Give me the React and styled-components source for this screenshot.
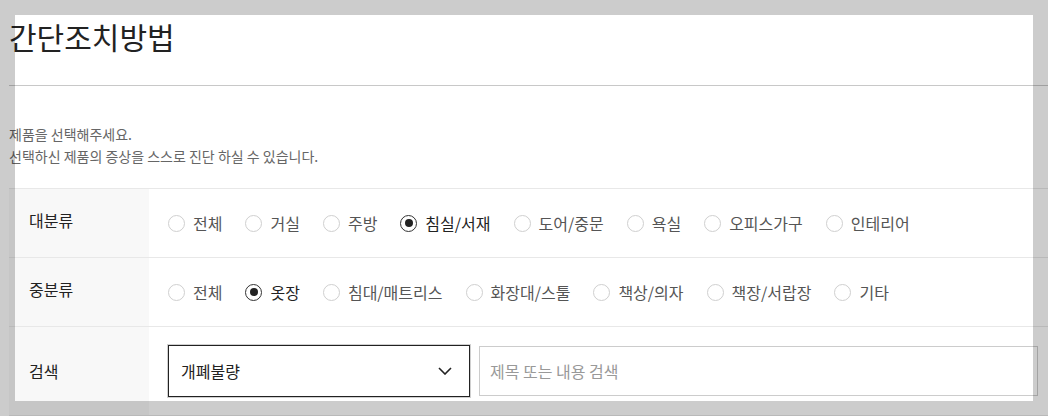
import React, { useState } from "react";
import styled, { createGlobalStyle } from "styled-components";

const GlobalStyle = createGlobalStyle`
  html, body {
    margin: 0;
    padding: 0;
    background: #ffffff;
    overflow: hidden;
  }
  body {
    font-family: "Noto Sans CJK KR", "Noto Sans", sans-serif;
    color: #222;
  }
  * { box-sizing: border-box; }
`;

const Page = styled.div`
  position: relative;
  padding-left: 9px;
  width: 1048px;
`;

const TitleBar = styled.div`
  height: 86px;
  border-bottom: 1px solid #c8c8c8;
  padding-top: 16px;
`;

const Title = styled.h2`
  margin: 0;
  font-size: 30px;
  line-height: 40px;
  font-weight: 400;
  color: #222;
`;

const Desc = styled.p`
  margin: 37px 0 21px;
  font-size: 14px;
  line-height: 22px;
  color: #666;
`;

const Table = styled.div`
  border-top: 1px solid #e8e8e8;
`;

const Row = styled.div`
  display: flex;
  min-height: ${(p) => p.$h}px;
  border-bottom: 1px solid #e8e8e8;
`;

const Label = styled.div`
  width: 140px;
  flex: none;
  background: #f8f8f8;
  padding: 0 0 ${(p) => p.$nudge}px 20px;
  display: flex;
  align-items: center;
  font-size: 16px;
  color: #222;
`;

const Cell = styled.div`
  flex: 1;
  display: flex;
  align-items: center;
  padding: 0 10px 0 19px;
  gap: ${(p) => p.$gap}px;
`;

const RadioItem = styled.label`
  display: inline-flex;
  align-items: center;
  gap: 8px;
  font-size: 16px;
  line-height: 22px;
  color: ${(p) => (p.$on ? "#222" : "#555")};
  cursor: pointer;
  white-space: nowrap;
`;

const Circle = styled.span`
  width: 17px;
  height: 17px;
  border-radius: 50%;
  border: 1px solid ${(p) => (p.$on ? "#333" : "#cfcfcf")};
  background: #fff;
  display: inline-flex;
  align-items: center;
  justify-content: center;
  flex: none;
  &::after {
    content: "";
    width: 8px;
    height: 8px;
    border-radius: 50%;
    background: #222;
    display: ${(p) => (p.$on ? "block" : "none")};
  }
`;

const SelectBox = styled.div`
  width: 302px;
  height: 52px;
  border: 1px solid #222;
  box-shadow: 0 0 0 1px #d0d0d0;
  display: flex;
  align-items: center;
  justify-content: space-between;
  padding: 0 17px 0 12px;
  font-size: 16px;
  color: #222;
  background: #fff;
  flex: none;
`;

const SearchInput = styled.input`
  flex: 1;
  height: 50px;
  border: 1px solid #cccccc;
  padding: 0 10px;
  font-family: "Noto Sans CJK KR", "Noto Sans", sans-serif;
  font-size: 16px;
  color: #222;
  outline: none;
  &::placeholder {
    color: #999;
  }
`;

const Spotlight = styled.div`
  position: absolute;
  left: 15px;
  top: 15px;
  width: 1018px;
  height: 386px;
  box-shadow: 0 0 0 3000px rgba(0, 0, 0, 0.2);
  pointer-events: none;
`;

const Chevron = () => (
  <svg width="14" height="8" viewBox="0 0 14 8" fill="none">
    <path d="M1 1l6 6 6-6" stroke="#222" strokeWidth="1.6" />
  </svg>
);

function RadioGroup({ items, value, onChange }) {
  return items.map((it) => (
    <RadioItem key={it} $on={it === value} onClick={() => onChange(it)}>
      <Circle $on={it === value} />
      {it}
    </RadioItem>
  ));
}

export default function App() {
  const [major, setMajor] = useState("침실/서재");
  const [minor, setMinor] = useState("옷장");
  return (
    <>
      <GlobalStyle />
      <Page>
        <TitleBar>
          <Title>간단조치방법</Title>
        </TitleBar>
        <Desc>
          제품을 선택해주세요.
          <br />
          선택하신 제품의 증상을 스스로 진단 하실 수 있습니다.
        </Desc>
        <Table>
          <Row $h={69}>
            <Label $nudge={6}>대분류</Label>
            <Cell $gap={23}>
              <RadioGroup
                items={["전체", "거실", "주방", "침실/서재", "도어/중문", "욕실", "오피스가구", "인테리어"]}
                value={major}
                onChange={setMajor}
              />
            </Cell>
          </Row>
          <Row $h={69}>
            <Label $nudge={6}>중분류</Label>
            <Cell $gap={23}>
              <RadioGroup
                items={["전체", "옷장", "침대/매트리스", "화장대/스툴", "책상/의자", "책장/서랍장", "기타"]}
                value={minor}
                onChange={setMinor}
              />
            </Cell>
          </Row>
          <Row $h={89}>
            <Label $nudge={0}>검색</Label>
            <Cell $gap={9}>
              <SelectBox>
                개폐불량
                <Chevron />
              </SelectBox>
              <SearchInput placeholder="제목 또는 내용 검색" />
            </Cell>
          </Row>
        </Table>
        <Spotlight />
      </Page>
    </>
  );
}
